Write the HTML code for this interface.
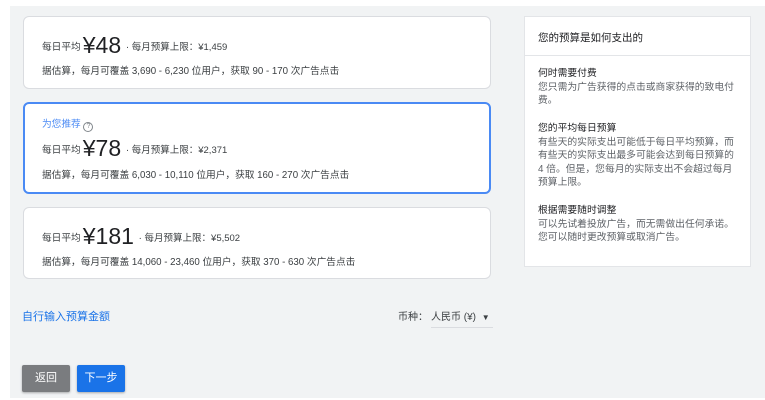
<!DOCTYPE html>
<html><head><meta charset="utf-8"><style>
*{box-sizing:border-box;margin:0;padding:0}
body{width:765px;height:400px;background:#fff;font-family:"Liberation Sans","Noto Sans CJK SC",sans-serif;color:#3c4043;position:relative;overflow:hidden}
.bg{position:absolute;left:10px;top:6px;width:755px;height:392px;background:#f1f3f4}
.card{position:absolute;left:23px;width:468px;background:#fff;border:1px solid #dadce0;border-radius:6px}
.sel{border:2px solid #4a8af4}
.t{position:absolute;left:18px;font-size:9.7px;color:#3c4043;white-space:nowrap}
.big{font-size:23px;color:#202124;vertical-align:-3px;margin:0 2px}
.small{font-size:9.5px}
.rp{position:absolute;left:524px;top:16px;width:227px;height:251px;background:#fff;border:1px solid #e3e5e8}
.rp .h{height:39px;border-bottom:1px solid #e3e5e8;padding:13px 0 0 13px;font-size:10.5px;color:#202124}
.rp .s{position:absolute;left:13px;width:201px;font-size:9.8px;line-height:13.6px;color:#5f6368}
.rp .s b{font-weight:normal;color:#202124}
.btn{position:absolute;top:365px;height:27px;width:48px;border-radius:2px;color:#fff;font-size:11px;text-align:center;line-height:27px;box-shadow:0 1px 2px rgba(0,0,0,.3)}
</style></head><body>
<div class="bg"></div>
<div class="card" style="top:16px;height:73px">
 <div class="t" style="top:15px">每日平均<span class="big">¥48</span> · <span class="small">每月预算上限：¥1,459</span></div>
 <div class="t" style="top:46px">据估算，每月可覆盖 3,690 - 6,230 位用户，获取 90 - 170 次广告点击</div>
</div>
<div class="card sel" style="top:102px;height:92px">
 <div class="t" style="top:12px;left:17px;color:#4a8af4">为您推荐 <span style="display:inline-block;width:10px;height:10px;border:1px solid #80868b;border-radius:50%;font-size:7px;line-height:8px;text-align:center;color:#80868b;vertical-align:-1px">?</span></div>
 <div class="t" style="top:31px;left:17px">每日平均<span class="big">¥78</span> · <span class="small">每月预算上限：¥2,371</span></div>
 <div class="t" style="top:63px;left:17px">据估算，每月可覆盖 6,030 - 10,110 位用户，获取 160 - 270 次广告点击</div>
</div>
<div class="card" style="top:207px;height:72px">
 <div class="t" style="top:15px">每日平均<span class="big">¥181</span> · <span class="small">每月预算上限：¥5,502</span></div>
 <div class="t" style="top:46px">据估算，每月可覆盖 14,060 - 23,460 位用户，获取 370 - 630 次广告点击</div>
</div>
<div class="rp">
 <div class="h">您的预算是如何支出的</div>
 <div class="s" style="top:50px"><b>何时需要付费</b><br>您只需为广告获得的点击或商家获得的致电付费。</div>
 <div class="s" style="top:105px"><b>您的平均每日预算</b><br>有些天的实际支出可能低于每日平均预算，而有些天的实际支出最多可能会达到每日预算的4 倍。但是，您每月的实际支出不会超过每月预算上限。</div>
 <div class="s" style="top:187px"><b>根据需要随时调整</b><br>可以先试着投放广告，而无需做出任何承诺。您可以随时更改预算或取消广告。</div>
</div>
<div style="position:absolute;left:22px;top:308px;font-size:11px;color:#1a73e8">自行输入预算金额</div>
<div style="position:absolute;left:398px;top:308px;font-size:10px;color:#3c4043">币种：</div>
<div style="position:absolute;left:431px;top:308px;width:62px;height:20px;border-bottom:1px solid #dadce0;font-size:10px;color:#3c4043">人民币 (¥) <span style="font-size:8px;margin-left:3px">▼</span></div>
<div class="btn" style="left:22px;background:#7a7c7f">返回</div>
<div class="btn" style="left:77px;background:#1a73e8">下一步</div>
</body></html>
